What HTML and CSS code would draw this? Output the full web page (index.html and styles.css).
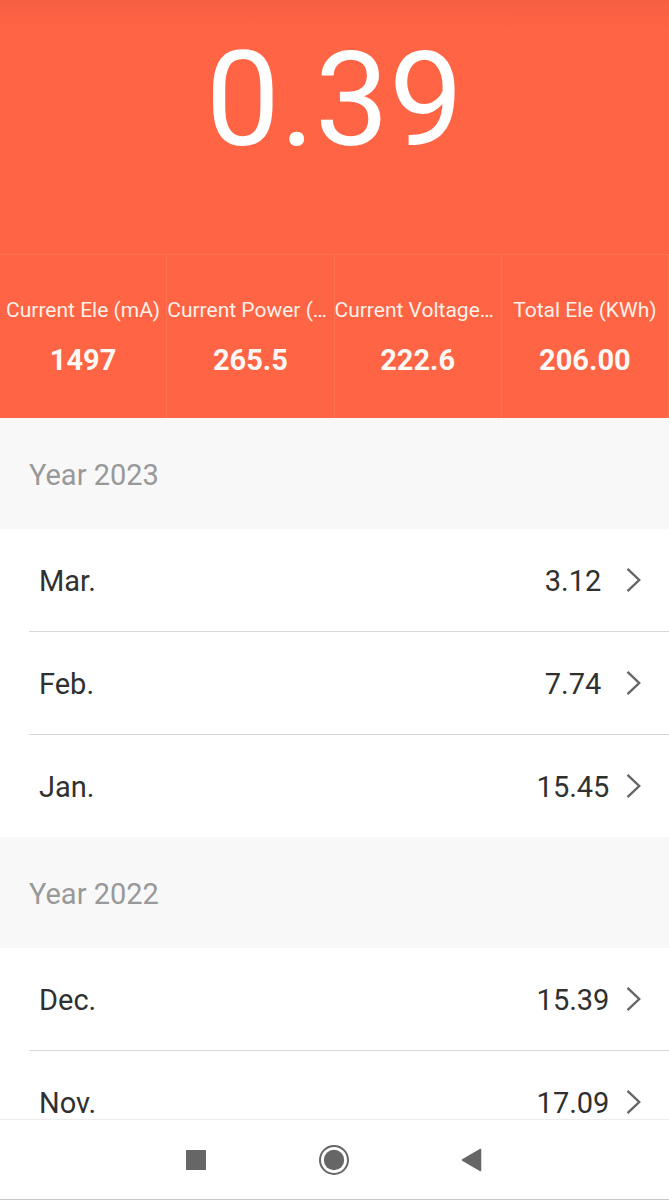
FILE: index.html
```html
<!DOCTYPE html>
<html lang="en">
<head>
<meta charset="utf-8">
<meta name="viewport" content="width=device-width, initial-scale=1">
<title>Electricity</title>
<link rel="stylesheet" href="styles.css">
</head>
<body>
<svg class="defs" aria-hidden="true"><symbol id="chevron" viewBox="0 0 16 26"><path d="M1.5 1.8 13.2 13 1.5 24.2" fill="none" stroke="currentColor" stroke-width="2.4"/></symbol></svg>
<div class="screen">
  <main class="content">
    <section class="hero">
      <h1 class="hero-value">0.39</h1>
      <dl class="stats">
        <div class="stat"><dt>Current Ele (mA)</dt><dd>1497</dd></div>
        <div class="stat"><dt class="shortened">Current Power (…</dt><dd>265.5</dd></div>
        <div class="stat"><dt class="shortened">Current Voltage…</dt><dd>222.6</dd></div>
        <div class="stat"><dt>Total Ele (KWh)</dt><dd>206.00</dd></div>
      </dl>
    </section>
    <section>
      <h2 class="year">Year 2023</h2>
      <ul class="months">
        <li><a class="month" href="#mar"><span class="name">Mar.</span><span class="amount">3.12</span><svg class="chevron" aria-hidden="true"><use href="#chevron"/></svg></a></li>
        <li><a class="month" href="#feb"><span class="name">Feb.</span><span class="amount">7.74</span><svg class="chevron" aria-hidden="true"><use href="#chevron"/></svg></a></li>
        <li><a class="month" href="#jan"><span class="name">Jan.</span><span class="amount">15.45</span><svg class="chevron" aria-hidden="true"><use href="#chevron"/></svg></a></li>
      </ul>
    </section>
    <section>
      <h2 class="year">Year 2022</h2>
      <ul class="months">
        <li><a class="month" href="#dec"><span class="name">Dec.</span><span class="amount">15.39</span><svg class="chevron" aria-hidden="true"><use href="#chevron"/></svg></a></li>
        <li><a class="month" href="#nov"><span class="name">Nov.</span><span class="amount">17.09</span><svg class="chevron" aria-hidden="true"><use href="#chevron"/></svg></a></li>
      </ul>
    </section>
  </main>
  <nav class="navbar" aria-label="System">
    <button class="nav-button" type="button" aria-label="Recent apps"><svg viewBox="0 0 32 32"><rect x="6" y="6" width="20" height="20" rx="0.5" fill="currentColor"/></svg></button>
    <button class="nav-button" type="button" aria-label="Home"><svg viewBox="0 0 32 32"><circle cx="16" cy="16" r="14" fill="none" stroke="currentColor" stroke-width="2"/><circle cx="16" cy="16" r="10.2" fill="currentColor"/></svg></button>
    <button class="nav-button" type="button" aria-label="Back"><svg viewBox="0 0 32 32"><path d="M6.500 16 24.500 5.500V26.500Z" fill="currentColor" stroke="currentColor" stroke-width="1.500" stroke-linejoin="round"/></svg></button>
  </nav>
</div>
</body>
</html>
```
FILE: styles.css
```css
* {
  box-sizing: border-box;
}

body {
  margin: 0;
  font-family: Roboto, "Liberation Sans", sans-serif;
  color: #303030;
  background: #fff;
}

.defs {
  display: none;
}

.screen {
  display: flex;
  flex-direction: column;
  height: 100vh;
}

.content {
  flex: 1;
  min-height: 0;
  overflow: hidden;
}

.hero {
  color: #fff;
  background: linear-gradient(#f65f41, #ff6444 28px);
}

.hero-value {
  margin: 0;
  padding: 20px 0 74px;
  font-size: 132px;
  font-weight: 400;
  line-height: 160px;
  text-align: center;
}

.stats {
  display: grid;
  grid-template-columns: repeat(4, minmax(0, 1fr));
  margin: 0;
  border-top: 1px solid #ff7450;
}

.stat {
  padding: 40px 0 38px;
  text-align: center;
  border-right: 1px solid #ff7450;
}

.stat dt {
  overflow: hidden;
  font-size: 21px;
  line-height: 30px;
  text-overflow: ellipsis;
  white-space: nowrap;
  color: #fff0e8;
}

.stat .shortened {
  text-align: left;
}

.stat dd {
  margin: 15px 0 0;
  font-size: 29px;
  font-weight: 700;
  line-height: 40px;
  color: #fff8f4;
}

.year {
  margin: 0;
  padding: 39px 29px 35px;
  font-size: 29px;
  font-weight: 400;
  line-height: 37px;
  color: #999;
  background: #f8f8f8;
}

.months {
  margin: 0;
  padding: 0 0 0 29px;
  list-style: none;
}

.months li + li {
  border-top: 1px solid #d8d8d8;
}

.month {
  display: flex;
  align-items: center;
  height: 102px;
  padding: 0 27px 0 10px;
  font-size: 29px;
  line-height: 36px;
  color: inherit;
  text-decoration: none;
}

.name,
.amount {
  padding-top: 2px;
}

.amount {
  min-width: 74px;
  margin-left: auto;
  text-align: center;
}

.chevron {
  width: 16px;
  height: 26px;
  margin-left: 16px;
  color: #666;
}

.navbar {
  display: flex;
  flex: none;
  justify-content: center;
  gap: 74px;
  padding: 8px 2px 7px 0;
  border-top: 1px solid #ececec;
  border-bottom: 1px solid #c8c8c8;
}

.nav-button {
  display: grid;
  place-items: center;
  width: 64px;
  height: 64px;
  padding: 0;
  color: #666;
  background: none;
  border: 0;
}

.nav-button svg {
  width: 32px;
  height: 32px;
}
```
